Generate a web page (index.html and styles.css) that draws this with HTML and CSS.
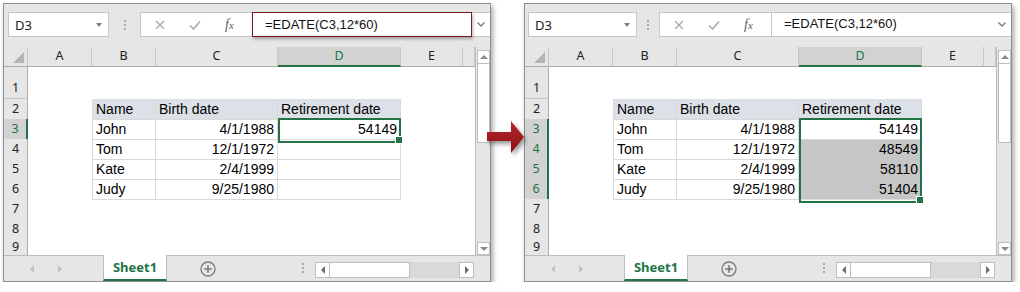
FILE: index.html
```html
<!DOCTYPE html>
<html lang="en">

<head>
    <meta charset="UTF-8">
    <meta name="viewport" content="width=device-width, initial-scale=1.0">
    <title>EDATE retirement date</title>
    <link rel="stylesheet" href="styles.css">
</head>

<body>
    <div class="page">
        <!-- before: only D3 filled -->
        <div class="sheet">
            <div class="bar">
                <div class="nameBox">D3<span class="drop"></span></div>
                <div class="grip"><i></i><i></i><i></i></div>
                <div class="fBar">
                    <div class="fxBox">
                        <span class="icon"><svg width="10" height="10" viewBox="0 0 10 10"><path d="M1 1L9 9M9 1L1 9" stroke="#a8a8a8" stroke-width="1.3" fill="none"/></svg></span>
                        <span class="icon"><svg width="12" height="10" viewBox="0 0 12 10"><path d="M1 5.5L4.5 9L11 1.5" stroke="#a8a8a8" stroke-width="1.5" fill="none"/></svg></span>
                        <span class="icon fx">f<em>x</em></span>
                    </div>
                    <div class="formula mark">=EDATE(C3,12*60)</div>
                    <div class="expand"><svg width="8" height="5" viewBox="0 0 8 5"><path d="M0.5 0.5L4 4L7.5 0.5" stroke="#7d7d7d" stroke-width="1.4" fill="none"/></svg></div>
                </div>
            </div>
            <div class="main">
                <div class="grid">
                    <div class="row head">
                        <div class="corner"></div><div>A</div><div>B</div><div>C</div><div class="on">D</div><div>E</div><div></div>
                    </div>
                    <div class="row tall">
                        <div class="num">1</div><div></div><div></div><div></div><div></div><div></div><div></div>
                    </div>
                    <div class="row">
                        <div class="num">2</div><div></div><div class="t th first">Name</div><div class="t th">Birth date</div><div class="t th">Retirement date</div><div></div><div></div>
                    </div>
                    <div class="row">
                        <div class="num on">3</div><div></div><div class="t first">John</div><div class="t r">4/1/1988</div><div class="t r sel" style="--rows: 1">54149</div><div></div><div></div>
                    </div>
                    <div class="row">
                        <div class="num">4</div><div></div><div class="t first">Tom</div><div class="t r">12/1/1972</div><div class="t r"></div><div></div><div></div>
                    </div>
                    <div class="row">
                        <div class="num">5</div><div></div><div class="t first">Kate</div><div class="t r">2/4/1999</div><div class="t r"></div><div></div><div></div>
                    </div>
                    <div class="row">
                        <div class="num">6</div><div></div><div class="t first">Judy</div><div class="t r">9/25/1980</div><div class="t r"></div><div></div><div></div>
                    </div>
                    <div class="row">
                        <div class="num">7</div><div></div><div></div><div></div><div></div><div></div><div></div>
                    </div>
                    <div class="row">
                        <div class="num">8</div><div></div><div></div><div></div><div></div><div></div><div></div>
                    </div>
                    <div class="row cut">
                        <div class="num">9</div><div></div><div></div><div></div><div></div><div></div><div></div>
                    </div>
                </div>
                <div class="vScroll">
                    <div class="btn up"></div>
                    <div class="thumb"></div>
                    <div class="btn down"></div>
                </div>
            </div>
            <div class="tabs">
                <div class="nav"><span class="prev"></span><span class="next"></span></div>
                <div class="tab">Sheet1</div>
                <div class="add"><svg width="16" height="16" viewBox="0 0 16 16"><circle cx="8" cy="8" r="7" stroke="#7a7a7a" stroke-width="1.3" fill="none"/><path d="M8 4.2V11.8M4.2 8H11.8" stroke="#7a7a7a" stroke-width="1.6"/></svg></div>
                <div class="grip small"><i></i><i></i><i></i></div>
                <div class="hScroll">
                    <div class="btn left"></div>
                    <div class="thumb"></div>
                    <div class="track"></div>
                    <div class="btn right"></div>
                </div>
            </div>
        </div>

        <svg class="arrow" width="44" height="42" viewBox="0 0 44 42">
            <defs>
                <linearGradient id="redGrad" x1="0" y1="0" x2="0" y2="1">
                    <stop offset="0" stop-color="#b5262c"/>
                    <stop offset="1" stop-color="#8c1117"/>
                </linearGradient>
            </defs>
            <polygon points="2,14 26,14 26,3 39,19 26,35 26,23 2,23" fill="url(#redGrad)"/>
        </svg>

        <!-- after: formula copied down D3:D6 -->
        <div class="sheet">
            <div class="bar">
                <div class="nameBox wide">D3<span class="drop"></span></div>
                <div class="grip narrow"><i></i><i></i><i></i></div>
                <div class="fBar">
                    <div class="fxBox">
                        <span class="icon"><svg width="10" height="10" viewBox="0 0 10 10"><path d="M1 1L9 9M9 1L1 9" stroke="#a8a8a8" stroke-width="1.3" fill="none"/></svg></span>
                        <span class="icon"><svg width="12" height="10" viewBox="0 0 12 10"><path d="M1 5.5L4.5 9L11 1.5" stroke="#a8a8a8" stroke-width="1.5" fill="none"/></svg></span>
                        <span class="icon fx">f<em>x</em></span>
                    </div>
                    <div class="formula">=EDATE(C3,12*60)</div>
                    <div class="expand"><svg width="8" height="5" viewBox="0 0 8 5"><path d="M0.5 0.5L4 4L7.5 0.5" stroke="#7d7d7d" stroke-width="1.4" fill="none"/></svg></div>
                </div>
            </div>
            <div class="main">
                <div class="grid">
                    <div class="row head">
                        <div class="corner"></div><div>A</div><div>B</div><div>C</div><div class="on">D</div><div>E</div><div></div>
                    </div>
                    <div class="row tall">
                        <div class="num">1</div><div></div><div></div><div></div><div></div><div></div><div></div>
                    </div>
                    <div class="row">
                        <div class="num">2</div><div></div><div class="t th first">Name</div><div class="t th">Birth date</div><div class="t th">Retirement date</div><div></div><div></div>
                    </div>
                    <div class="row">
                        <div class="num on">3</div><div></div><div class="t first">John</div><div class="t r">4/1/1988</div><div class="t r sel" style="--rows: 4">54149</div><div></div><div></div>
                    </div>
                    <div class="row">
                        <div class="num on">4</div><div></div><div class="t first">Tom</div><div class="t r">12/1/1972</div><div class="t r fill">48549</div><div></div><div></div>
                    </div>
                    <div class="row">
                        <div class="num on">5</div><div></div><div class="t first">Kate</div><div class="t r">2/4/1999</div><div class="t r fill">58110</div><div></div><div></div>
                    </div>
                    <div class="row">
                        <div class="num on">6</div><div></div><div class="t first">Judy</div><div class="t r">9/25/1980</div><div class="t r fill">51404</div><div></div><div></div>
                    </div>
                    <div class="row">
                        <div class="num">7</div><div></div><div></div><div></div><div></div><div></div><div></div>
                    </div>
                    <div class="row">
                        <div class="num">8</div><div></div><div></div><div></div><div></div><div></div><div></div>
                    </div>
                    <div class="row cut">
                        <div class="num">9</div><div></div><div></div><div></div><div></div><div></div><div></div>
                    </div>
                </div>
                <div class="vScroll">
                    <div class="btn up"></div>
                    <div class="thumb"></div>
                    <div class="btn down"></div>
                </div>
            </div>
            <div class="tabs">
                <div class="nav"><span class="prev"></span><span class="next"></span></div>
                <div class="tab">Sheet1</div>
                <div class="add"><svg width="16" height="16" viewBox="0 0 16 16"><circle cx="8" cy="8" r="7" stroke="#7a7a7a" stroke-width="1.3" fill="none"/><path d="M8 4.2V11.8M4.2 8H11.8" stroke="#7a7a7a" stroke-width="1.6"/></svg></div>
                <div class="grip small"><i></i><i></i><i></i></div>
                <div class="hScroll">
                    <div class="btn left"></div>
                    <div class="thumb"></div>
                    <div class="track"></div>
                    <div class="btn right"></div>
                </div>
            </div>
        </div>
    </div>
</body>

</html>
```

FILE: styles.css
```css
* {
    box-sizing: border-box;
}

body {
    margin: 0;
    background: #fff;
    font-family: "Liberation Sans", Arial, sans-serif;
}

.page {
    position: relative;
    display: flex;
    gap: 33px;
    padding: 3px 0 0 3px;
}

.sheet {
    display: flex;
    flex-direction: column;
    width: 488px;
    height: 279px;
    background: #e6e6e6;
    border: 1px solid #8e8e8e;
    box-shadow: 2px 3px 5px rgba(0, 0, 0, .35);
}

/* formula bar row */
.bar {
    display: flex;
    flex: none;
    height: 43px;
    padding-top: 8px;
}

.nameBox {
    display: flex;
    align-items: center;
    margin-left: 4px;
    width: 101px;
    height: 25px;
    padding-left: 6px;
    background: #fff;
    border: 1px solid #c6c6c6;
    font: 13px "Noto Sans", sans-serif;
    color: #222;
}

.nameBox.wide {
    margin-left: 3px;
    width: 109px;
}

.drop {
    margin-left: auto;
    margin-right: 6px;
    border-left: 3px solid transparent;
    border-right: 3px solid transparent;
    border-top: 4px solid #7d7d7d;
}

.grip {
    display: flex;
    flex-direction: column;
    align-items: center;
    justify-content: center;
    gap: 2px;
    width: 31px;
    height: 25px;
}

.grip.narrow {
    width: 22px;
}

.grip i {
    display: block;
    width: 2px;
    height: 2px;
    background: #a9a9a9;
}

.fBar {
    display: flex;
    flex: 1;
    height: 25px;
    background: #fff;
    border: 1px solid #c6c6c6;
    border-right: 0;
}

.fxBox {
    display: flex;
    align-items: center;
    width: 111px;
    padding-left: 1px;
}

.icon {
    display: flex;
    justify-content: center;
    width: 35px;
}

.fx {
    font: italic 14px "Liberation Serif", serif;
    color: #5c5c5c;
}

.fx em {
    font-size: 11px;
    position: relative;
    top: 2px;
}

.formula {
    flex: 1;
    margin: -1px 0;
    padding-left: 12px;
    line-height: 24px;
    font-size: 13px;
    color: #111;
    border-left: 1px solid #c6c6c6;
}

.formula.mark {
    flex: none;
    width: 220px;
    border: 1px solid #7a1a1c;
    box-shadow: 1px 2px 3px rgba(0, 0, 0, .3);
}

.expand {
    display: flex;
    align-items: center;
    justify-content: center;
    width: 18px;
}

/* cells */
.main {
    display: flex;
    flex: none;
    height: 208px;
}

.grid {
    width: 472px;
    height: 208px;
    overflow: hidden;
    background: #fff;
    border-right: 1px solid #bdbdbd;
}

.row {
    display: grid;
    grid-template-columns: 24px 64px 64px 122px 123px 62px 12px;
    height: 20px;
    font-size: 14px;
    color: #000;
}

.row.tall {
    height: 33px;
}

.row.cut {
    height: 16px;
}

.row.cut .num {
    line-height: 16px;
    border-bottom: 0;
}

.row.head {
    height: 19px;
    background: #e6e6e6;
    font: 12.5px "Noto Sans", sans-serif;
    color: #222;
}

.row.head div {
    text-align: center;
    line-height: 18px;
    border-right: 1px solid #c6c6c6;
    border-bottom: 1px solid #ababab;
}

.row.head .on {
    background: #d2d2d2;
    color: #217346;
    border-bottom: 2px solid #217346;
}

.corner {
    position: relative;
}

.corner::after {
    content: "";
    position: absolute;
    right: 3px;
    bottom: 3px;
    border-left: 11px solid transparent;
    border-bottom: 11px solid #b4b4b4;
}

.num {
    display: flex;
    align-items: flex-end;
    justify-content: center;
    background: #e6e6e6;
    font: 12.5px/20px "Noto Sans", sans-serif;
    color: #222;
    border-right: 1px solid #ababab;
    border-bottom: 1px solid #c6c6c6;
}

.num.on {
    background: #d2d2d2;
    color: #217346;
    border-right: 2px solid #217346;
}

.t {
    padding: 1px 3px 0;
    line-height: 19px;
    white-space: nowrap;
    border-right: 1px solid #d9d9d9;
    border-bottom: 1px solid #d9d9d9;
}

.t.first {
    border-left: 1px solid #d9d9d9;
}

.t.th {
    background: #dce1e7;
}

.t.r {
    text-align: right;
    padding-right: 3px;
}

.t.fill {
    background: #c6c6c6;
    border-bottom-color: #dedede;
}

.sel {
    position: relative;
}

.sel::before {
    content: "";
    position: absolute;
    top: -1px;
    left: 0;
    right: -1px;
    height: calc(var(--rows) * 20px + 1px);
    border: 2px solid #217346;
}

.sel::after {
    content: "";
    position: absolute;
    right: -3px;
    top: calc(var(--rows) * 20px - 3px);
    width: 6px;
    height: 6px;
    background: #217346;
    border: 1px solid #fff;
}

/* scroll bars */
.vScroll {
    display: flex;
    flex-direction: column;
    width: 13px;
    margin-left: 1px;
    padding-top: 3px;
}

.btn {
    position: relative;
    flex: none;
    background: #fff;
    border: 1px solid #bdbdbd;
}

.vScroll .btn {
    height: 14px;
}

.vScroll .thumb {
    height: 79px;
    background: #fff;
    border: 1px solid #bdbdbd;
    border-top: 0;
}

.vScroll .down {
    margin-top: auto;
    height: 13px;
}

.btn::after {
    content: "";
    position: absolute;
    left: 50%;
    top: 50%;
    transform: translate(-50%, -50%);
}

.up::after {
    border-left: 4px solid transparent;
    border-right: 4px solid transparent;
    border-bottom: 4px solid #8a8a8a;
}

.down::after {
    border-left: 4px solid transparent;
    border-right: 4px solid transparent;
    border-top: 4px solid #8a8a8a;
}

.left::after {
    border-top: 4px solid transparent;
    border-bottom: 4px solid transparent;
    border-right: 4px solid #6e6e6e;
}

.right::after {
    border-top: 4px solid transparent;
    border-bottom: 4px solid transparent;
    border-left: 4px solid #6e6e6e;
}

/* sheet tabs */
.tabs {
    display: flex;
    flex: none;
    height: 26px;
    border-top: 1px solid #bdbdbd;
}

.nav {
    display: flex;
    align-items: center;
    gap: 24px;
    width: 99px;
    padding-left: 26px;
}

.prev {
    border-top: 4px solid transparent;
    border-bottom: 4px solid transparent;
    border-right: 4px solid #c2c2c2;
}

.next {
    border-top: 4px solid transparent;
    border-bottom: 4px solid transparent;
    border-left: 4px solid #c2c2c2;
}

.tab {
    width: 64px;
    margin-top: -1px;
    height: 26px;
    background: #fff;
    border-left: 1px solid #bdbdbd;
    border-right: 1px solid #bdbdbd;
    border-bottom: 2px solid #217346;
    text-align: center;
    font: bold 13px/24px "Noto Sans", sans-serif;
    color: #217346;
}

.add {
    display: flex;
    align-items: center;
    margin-left: 33px;
}

.grip.small {
    width: 8px;
    height: 24px;
    margin-left: 83px;
}

.hScroll {
    display: flex;
    width: 159px;
    height: 16px;
    margin: 6px 0 0 8px;
}

.hScroll .btn {
    width: 15px;
}

.hScroll .thumb {
    width: 80px;
    background: #fff;
    border: 1px solid #bdbdbd;
    border-left: 0;
}

.hScroll .track {
    flex: 1;
    background: #d9d9d9;
}

.arrow {
    position: absolute;
    left: 485px;
    top: 118px;
    filter: drop-shadow(2px 3px 2px rgba(0, 0, 0, .4));
}
```
